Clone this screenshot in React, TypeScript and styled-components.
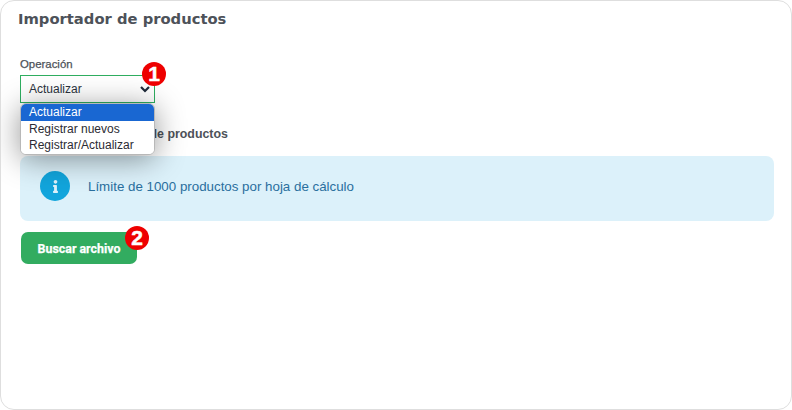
import styled, { createGlobalStyle } from 'styled-components';
import { FaInfo } from 'react-icons/fa';

const GlobalStyle = createGlobalStyle`
  html, body {
    margin: 0;
    padding: 0;
    background: #fff;
  }
  body {
    font-family: 'Liberation Sans', Arial, sans-serif;
  }
  * {
    box-sizing: border-box;
  }
`;

const Card = styled.main`
  width: 792px;
  height: 410px;
  border: 1px solid #dedede;
  border-radius: 14px;
  background: #fff;
  padding: 9px 17px 0 19px;
  overflow: hidden;
`;

const Title = styled.h1`
  margin: 0 0 0 -2px;
  font-family: 'DejaVu Sans', Verdana, sans-serif;
  font-size: 14.75px;
  line-height: 18px;
  font-weight: 700;
  color: #4d5259;
`;

const Field = styled.div`
  position: relative;
  width: 135px;
  margin-top: 29px;
`;

const FieldLabel = styled.label`
  display: block;
  font-size: 11.4px;
  line-height: 14px;
  color: #4d5259;
  font-weight: 400;
  -webkit-text-stroke: 0.25px #4d5259;
  margin-bottom: 4px;
`;

const SelectBox = styled.div`
  position: relative;
  width: 135px;
  height: 28px;
  border: 1px solid #2fae60;
  padding-left: 8px;
  font-size: 12px;
  line-height: 26px;
  color: #2b3440;
`;

const Chevron = styled.svg`
  position: absolute;
  right: 3px;
  top: 8px;
  width: 12px;
  height: 10px;
`;

const Menu = styled.ul`
  position: absolute;
  left: 0;
  top: 46px;
  width: 135px;
  margin: 0;
  padding: 0;
  list-style: none;
  background: #fff;
  border: 1px solid #b8b8b8;
  border-radius: 6px;
  overflow: hidden;
  box-shadow: 0 4px 30px rgba(0, 0, 0, 0.42);
  z-index: 2;
`;

const MenuItem = styled.li<{ $active?: boolean }>`
  height: 16.5px;
  padding-left: 8px;
  font-size: 12px;
  line-height: 16px;
  white-space: nowrap;
  background: ${({ $active }) => ($active ? '#1967d2' : '#fff')};
  color: ${({ $active }) => ($active ? '#fff' : '#2b2b33')};
`;

const Badge = styled.span<{ $top: number; $left: number }>`
  position: absolute;
  top: ${({ $top }) => $top}px;
  left: ${({ $left }) => $left}px;
  width: 24px;
  height: 24px;
  border-radius: 50%;
  background: #ee0000;
  color: #fff;
  font-size: 21px;
  line-height: 24px;
  font-weight: 700;
  text-align: center;
  -webkit-text-stroke: 0.5px #fff;
  z-index: 3;
`;

const SectionLabel = styled.h2`
  margin: 24px 0 0;
  font-size: 12.4px;
  line-height: 14px;
  font-weight: 700;
  color: #4d5259;
`;

const Notice = styled.div`
  display: flex;
  align-items: center;
  gap: 18px;
  height: 65px;
  margin-top: 15px;
  padding: 0 0 5px 20px;
  border-radius: 8px;
  background: #dcf1fa;
  color: #2a6f9e;
  font-size: 13.33px;
`;

const NoticeIcon = styled.span`
  display: flex;
  align-items: center;
  justify-content: center;
  width: 30px;
  height: 30px;
  border-radius: 50%;
  background: #12a5dc;
  color: #dcf1fa;
  font-size: 13px;
`;

const ButtonWrap = styled.div`
  position: relative;
  width: 116px;
  margin: 11px 0 0 1px;
`;

const SearchButton = styled.button`
  display: block;
  width: 116px;
  height: 32px;
  padding: 0;
  border: 0;
  border-radius: 7px;
  background: #32ac60;
  color: #fff;
  font-family: Roboto, 'Liberation Sans', sans-serif;
  font-size: 12.4px;
  font-weight: 700;
  -webkit-text-stroke: 0.25px #fff;
  cursor: pointer;
`;

export default function App() {
  return (
    <>
      <GlobalStyle />
      <Card>
        <Title>Importador de productos</Title>

        <Field>
          <FieldLabel>Operación</FieldLabel>
          <SelectBox>
            Actualizar
            <Chevron viewBox="0 0 12 10" fill="none" aria-hidden="true">
              <path d="M2 3l4 4 4-4" stroke="#1f2a3a" strokeWidth="2.2" />
            </Chevron>
          </SelectBox>
          <Badge $top={5} $left={122}>1</Badge>
          <Menu>
            <MenuItem $active>Actualizar</MenuItem>
            <MenuItem>Registrar nuevos</MenuItem>
            <MenuItem>Registrar/Actualizar</MenuItem>
          </Menu>
        </Field>

        <SectionLabel>Selecciona el archivo de productos</SectionLabel>

        <Notice>
          <NoticeIcon>
            <FaInfo />
          </NoticeIcon>
          Límite de 1000 productos por hoja de cálculo
        </Notice>

        <ButtonWrap>
          <SearchButton type="button">Buscar archivo</SearchButton>
          <Badge $top={-6} $left={104}>2</Badge>
        </ButtonWrap>
      </Card>
    </>
  );
}
